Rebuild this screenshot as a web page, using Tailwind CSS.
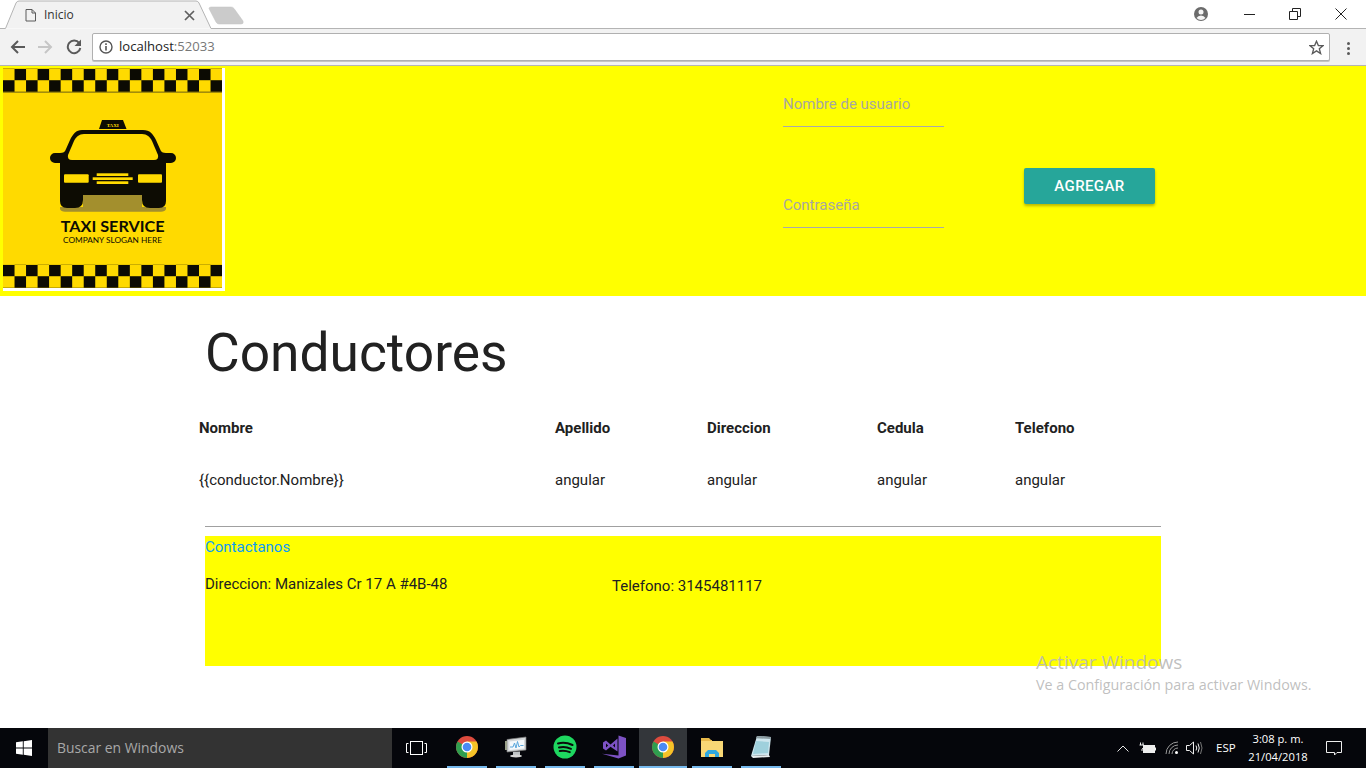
<!DOCTYPE html>
<html lang="es">
<head>
<meta charset="utf-8">
<title>Inicio</title>
<script src="https://cdn.jsdelivr.net/npm/@tailwindcss/browser@4"></script>
</head>
<body class="m-0 overflow-hidden bg-white font-['Roboto',sans-serif]">
<div class="relative flex h-[768px] w-[1366px] flex-col overflow-hidden">

  <!-- Tab strip -->
  <div class="relative flex h-[29px] shrink-0 items-start bg-white">
    <svg class="absolute left-0 top-0" width="250" height="29" viewBox="0 0 250 29">
      <path d="M0 28.5H5.5L16 3Q17 1 19 1H196Q198 1 199 3L211 28.5" fill="#f2f2f2" stroke="#b4b4b4"/>
      <path d="M209 8.5Q209 7 211 7H231Q233 7 234 8.5L243 21Q244 24 241 24H219Q217 24 216 22Z" fill="#cbcbcb" stroke="#c0c0c0" stroke-width=".5"/>
      <path d="M26 9.5H32L35.5 13V21H26Z M32 9.5V13H35.5" fill="none" stroke="#5a5a5a"/>
      <path d="M185 11L194 20M194 11L185 20" stroke="#5f5f5f" stroke-width="1.7"/>
    </svg>
    <span class="relative ml-[44px] mt-[7px] font-['Open_Sans',sans-serif] text-[12px] leading-[16px] text-[#333]">Inicio</span>
    <div class="absolute bottom-0 left-[211px] right-0 h-px bg-[#b4b4b4]"></div>
    <div class="absolute right-0 top-0 flex h-[28px] items-center">
      <svg class="mr-[35px]" width="16" height="16" viewBox="0 0 16 16">
        <circle cx="8" cy="8" r="7" fill="#6b6b6b"/>
        <circle cx="8" cy="6" r="2.5" fill="#f4f4f4"/>
        <path d="M3.5 12Q5 9.5 8 9.5T12.5 12Q10.500 14 8 14T3.5 12Z" fill="#f4f4f4"/>
      </svg>
      <svg class="mr-[33px]" width="12" height="12" viewBox="0 0 12 12"><path d="M0 6.500H11" stroke="#222" stroke-width="1"/></svg>
      <svg class="mr-[34px]" width="12" height="12" viewBox="0 0 12 12"><path d="M.5 3.500H8.500V11.500H.5ZM3.500 3.500V.5H11.500V8.500H8.500" fill="none" stroke="#222"/></svg>
      <svg class="mr-[19px]" width="12" height="12" viewBox="0 0 12 12"><path d="M.5 .5L11.500 11.500M11.500 .5L.5 11.500" stroke="#222"/></svg>
    </div>
  </div>

  <!-- Toolbar -->
  <div class="flex h-[37px] shrink-0 items-start border-b border-[#b4b4b4] bg-[#f2f2f2]">
    <div class="flex h-[36px] w-[92px] shrink-0 items-center pl-[10px]">
      <svg class="mr-[11px]" width="16" height="16" viewBox="0 0 16 16"><path d="M15 8H2M8 2L2 8L8 14" fill="none" stroke="#5a5a5a" stroke-width="2"/></svg>
      <svg class="mr-[13px]" width="16" height="16" viewBox="0 0 16 16"><path d="M1 8H14M8 2L14 8L8 14" fill="none" stroke="#c6c6c6" stroke-width="2"/></svg>
      <svg width="16" height="16" viewBox="0 0 16 16"><path d="M13.200 4.200A6.300 6.300 0 1 0 14.300 9" fill="none" stroke="#5a5a5a" stroke-width="2"/><path d="M15 0.500V7H8.500Z" fill="#5a5a5a"/></svg>
    </div>
    <div class="mt-[4px] flex h-[28px] w-[1238px] shrink-0 items-center rounded-[2px] border border-[#b0b0b0] bg-white pl-[6px] shadow-[0_1px_0_#c4c4c4]">
      <svg class="mr-[6px]" width="14" height="14" viewBox="0 0 14 14"><circle cx="7" cy="7" r="6" fill="none" stroke="#555" stroke-width="1.400"/><path d="M7 6V10.500M7 3.300V5" stroke="#555" stroke-width="1.600"/></svg>
      <span class="font-['Open_Sans',sans-serif] text-[13.100px] leading-none text-[#222]">localhost<span class="text-[#777]">:52033</span></span>
      <svg class="ml-auto mr-[5px]" width="15" height="15" viewBox="0 0 16 16"><path d="M8 1.300L10 6H15L11 9.300L12.400 14.500L8 11.600L3.600 14.500L5 9.300L1 6H6Z" fill="none" stroke="#5a5a5a" stroke-width="1.400"/></svg>
    </div>
    <div class="ml-[17px] mt-[13px] flex flex-col gap-[2px]">
      <span class="h-[3px] w-[3px] rounded-full bg-[#5a5a5a]"></span>
      <span class="h-[3px] w-[3px] rounded-full bg-[#5a5a5a]"></span>
      <span class="h-[3px] w-[3px] rounded-full bg-[#5a5a5a]"></span>
    </div>
  </div>

  <!-- Page -->
  <main class="relative min-h-0 flex-1 overflow-hidden bg-white">
    <header class="flex h-[230px] items-start bg-[#ffff00]">
      <div class="ml-[3px] mt-[2px] h-[223px] w-[222px] shrink-0 bg-white">
        <svg class="block" width="219" height="220" viewBox="0 0 219 220">
          <defs>
            <pattern id="chkA" patternUnits="userSpaceOnUse" width="23.060" height="23.060" x="0" y="0.700">
              <rect x="11.530" y="0" width="11.530" height="11.530" fill="#0c0b03"/>
              <rect x="0" y="11.530" width="11.530" height="11.530" fill="#0c0b03"/>
            </pattern>
            <pattern id="chkB" patternUnits="userSpaceOnUse" width="23.060" height="23.060" x="0" y="196.700">
              <rect x="0" y="0" width="11.530" height="11.530" fill="#0c0b03"/>
              <rect x="11.530" y="11.530" width="11.530" height="11.530" fill="#0c0b03"/>
            </pattern>
          </defs>
          <rect width="219" height="220" fill="#ffda00"/>
          <rect x="0" y="0.700" width="219" height="23.300" fill="url(#chkA)"/>
          <rect x="0" y="24" width="219" height=".8" fill="#8d7a10"/>
          <rect x="0" y="196.700" width="219" height="23.300" fill="url(#chkB)"/>
          <path d="M57 139H163V141Q162 143.700 158 143.700H62Q58 143.700 57 141Z" fill="#a38f2d"/>
          <rect x="80" y="127" width="59" height="16" fill="#a38f2d"/>
          <path d="M79 62H140C147 62 150 66 153 72L157 81C158 84 160 85 163 85H168A5 5 0 0 1 168 95H163V133Q163 140 156 140H147Q139 140 139 132V127H80V132Q80 140 72 140H64Q57 140 57 133V95H52A5 5 0 0 1 52 85H57C60 85 62 84 63 81L67 72C70 66 73 62 79 62Z" fill="#0d0c03"/>
          <path d="M81 66H139C144 66 147 69 149 73L155 87Q156 92 151 92H69Q64 92 65 87L71 73C73 69 76 66 81 66Z" fill="#ffda00"/>
          <path d="M99 52H120L123.500 61H96Z" fill="#0d0c03"/>
          <text x="109.700" y="59" text-anchor="middle" font-family="'Liberation Serif',serif" font-weight="700" font-size="5" fill="#ffda00">TAXI</text>
          <rect x="61" y="106.300" width="24.700" height="8.400" rx="1" fill="#ffda00"/>
          <rect x="135" y="106.300" width="24" height="8.400" rx="1" fill="#ffda00"/>
          <rect x="93.700" y="105.300" width="31.600" height="2.700" fill="#ffda00"/>
          <rect x="89.700" y="109.300" width="40" height="2.700" fill="#ffda00"/>
          <rect x="93.700" y="113.300" width="31.600" height="2.700" fill="#ffda00"/>
          <text x="57.700" y="164" textLength="104" lengthAdjust="spacingAndGlyphs" font-family="Lato,sans-serif" font-weight="700" font-size="15" fill="#0d0c03">TAXI SERVICE</text>
          <text x="60" y="174.700" textLength="99" lengthAdjust="spacingAndGlyphs" font-family="Lato,sans-serif" font-size="8" fill="#0d0c03">COMPANY SLOGAN HERE</text>
        </svg>
      </div>
      <div class="ml-[558px] w-[161px] shrink-0">
        <div class="mt-[28px] flex h-[33px] items-start border-b border-[#a9a9a9] text-[15px] leading-[20px] text-[#a8a7a0]">Nombre de usuario</div>
        <div class="mt-[68px] flex h-[33px] items-start border-b border-[#a9a9a9] text-[15px] leading-[20px] text-[#a8a7a0]">Contraseña</div>
      </div>
      <button class="ml-[80px] mt-[102px] h-[36px] w-[131px] shrink-0 rounded-[2px] bg-[#26a69a] text-[15px] font-medium tracking-[0.400px] text-white shadow-[0_2px_3px_rgba(0,0,0,0.28)]">AGREGAR</button>
    </header>

    <section class="mx-auto w-[956px]">
      <h1 class="mt-[23px] h-[68px] text-[53.300px] font-normal leading-[68px] text-[#212121]">Conductores</h1>
      <div class="-ml-[6px] mt-[31px] grid grid-cols-[356px_152px_170px_138px_1fr] text-[15px] leading-[20px] text-[#212121]">
        <div class="font-bold">Nombre</div>
        <div class="font-bold">Apellido</div>
        <div class="font-bold">Direccion</div>
        <div class="font-bold">Cedula</div>
        <div class="font-bold">Telefono</div>
        <div class="mt-[32px]">{{conductor.Nombre}}</div>
        <div class="mt-[32px]">angular</div>
        <div class="mt-[32px]">angular</div>
        <div class="mt-[32px]">angular</div>
        <div class="mt-[32px]">angular</div>
      </div>
      <hr class="mt-[36px] h-px border-0 bg-[#a0a0a0]">
      <footer class="mt-[9px] h-[130px] bg-[#ffff00] text-[15px] leading-[20px] text-[#212121]">
        <a class="block pt-[1px] text-[#0d9cf5]">Contactanos</a>
        <div class="mt-[17px] flex items-start">
          <span class="w-[407px] shrink-0">Direccion: Manizales Cr 17 A #4B-48</span>
          <span class="mt-[2px]">Telefono: 3145481117</span>
        </div>
      </footer>
    </section>

    <div class="absolute left-[1036px] top-[583px] font-['Open_Sans',sans-serif] text-[#b8b8b8]/90">
      <div class="text-[19px] leading-[26px]">Activar Windows</div>
      <div class="text-[14.300px] leading-[20px]">Ve a Configuración para activar Windows.</div>
    </div>
  </main>

  <!-- Taskbar -->
  <div class="flex h-[40px] shrink-0 items-stretch bg-[#05060b] font-['Open_Sans',sans-serif]">
    <div class="flex w-[48px] shrink-0 items-center justify-center">
      <svg width="16" height="16" viewBox="0 0 16 16"><path d="M0 2.300L6.800 1.300V7.500H0ZM7.700 1.200L16 0V7.500H7.700ZM0 8.400H6.800V14.700L0 13.700ZM7.700 8.400H16V16L7.700 14.800Z" fill="#fff"/></svg>
    </div>
    <div class="flex w-[344px] shrink-0 items-center bg-[#333333] pl-[9px] text-[13.900px] text-[#a8a8a8]">Buscar en Windows</div>
    <div class="flex w-[48px] shrink-0 items-center justify-center">
      <svg width="21" height="14" viewBox="0 0 21 14"><rect x="4.500" y=".5" width="12" height="13" fill="none" stroke="#fff"/><path d="M2.500 2.500H.5V11.500H2.500M18.500 2.500H20.500V11.500H18.500" fill="none" stroke="#fff"/></svg>
    </div>

    <div class="ml-[7px] flex w-[40px] shrink-0 items-center justify-center border-b-2 border-[#76b9ed]">
      <svg width="24" height="24" viewBox="0 0 24 24"><circle cx="12" cy="12" r="11" fill="#dd4b3e"/><path d="M12 12L2.500 6.500A11 11 0 0 0 12 23Z" fill="#2f9e4f"/><path d="M12 12L12 23A11 11 0 0 0 21.500 6.500H12Z" fill="#f6c327"/><circle cx="12" cy="12" r="5.500" fill="#fff"/><circle cx="12" cy="12" r="4.300" fill="#4a8af4"/></svg>
    </div>
    <div class="ml-[9px] flex w-[40px] shrink-0 items-center justify-center border-b-2 border-[#76b9ed]">
      <svg width="24" height="24" viewBox="0 0 24 24"><path d="M3 4.500L22 2V15L3 17Z" fill="#d4d8da" stroke="#777" stroke-width=".7"/><path d="M5.500 6.500L20 4.800V13.500L5.500 15Z" fill="#f4f8fb"/><path d="M6 12H9L10.500 8L12 13L13.500 6.500L15 12L16.500 10.500L19.500 10.500" fill="none" stroke="#5aa7dc" stroke-width="1"/><path d="M9 17L16 16.500V20L9 20.500Z" fill="#bfc3c5"/><ellipse cx="12" cy="21" rx="6" ry="1.500" fill="#d6d6d6"/><rect x="1" y="6" width="2" height="9" fill="#9aa08a"/></svg>
    </div>
    <div class="ml-[9px] flex w-[40px] shrink-0 items-center justify-center border-b-2 border-[#76b9ed]">
      <svg width="24" height="24" viewBox="0 0 24 24"><circle cx="12" cy="12" r="11.500" fill="#1ed760"/><path d="M5 8.500Q12 6.500 19.500 10M6 12.500Q12 11 18 13.800M6.700 16Q12 15 16.800 17.200" fill="none" stroke="#0b0b0b" stroke-width="2" stroke-linecap="round"/></svg>
    </div>
    <div class="ml-[9px] flex w-[40px] shrink-0 items-center justify-center border-b-2 border-[#76b9ed]">
      <svg width="24" height="24" viewBox="0 0 24 24"><path d="M16.500 .5L24 3V20.500L16.500 23.500L0 18.800L16.500 20.500Z" fill="#7d52c4"/><path d="M1 7.500L4 5.500L8.500 9.500L15.500 3.500V16.500L8.500 11.800L4 15.500L1 13.500ZM4 8.500V12.500L6.200 10.500ZM11 10.500L13 12.500V8.500Z" fill="#7d52c4" fill-rule="evenodd"/></svg>
    </div>
    <div class="ml-[5px] flex w-[48px] shrink-0 items-center justify-center border-b-2 border-[#76b9ed] bg-[#33363a]">
      <svg width="24" height="24" viewBox="0 0 24 24"><circle cx="12" cy="12" r="11" fill="#dd4b3e"/><path d="M12 12L2.500 6.500A11 11 0 0 0 12 23Z" fill="#2f9e4f"/><path d="M12 12L12 23A11 11 0 0 0 21.500 6.500H12Z" fill="#f6c327"/><circle cx="12" cy="12" r="5.500" fill="#fff"/><circle cx="12" cy="12" r="4.300" fill="#4a8af4"/></svg>
    </div>
    <div class="ml-[5px] flex w-[40px] shrink-0 items-center justify-center border-b-2 border-[#76b9ed]">
      <svg width="22" height="20" viewBox="0 0 22 20"><path d="M0 1H8L10 3H11V6H0Z" fill="#e8b94a"/><rect x="0" y="4" width="22" height="16" fill="#f8d775"/><path d="M4 20V16L7 13H15L18 16V20H14V17H8V20Z" fill="#2fa8e0"/></svg>
    </div>
    <div class="ml-[9px] flex w-[40px] shrink-0 items-center justify-center border-b-2 border-[#76b9ed]">
      <svg width="24" height="24" viewBox="0 0 24 24"><path d="M8 1L22 2L20 20L2 21Z" fill="#cfe6ee"/><path d="M8 1L22 2L21.800 4L7 3.300Z" fill="#8a9aa0"/><path d="M7 6L20 7L19 18L4 19Z" fill="#9fd0dc"/><path d="M2 21L20 20L21 22L4 23Z" fill="#e9eef0"/></svg>
    </div>

    <div class="ml-auto flex items-center text-white">
      <svg class="mr-[10px]" width="12" height="7" viewBox="0 0 12 7"><path d="M.5 6.500L6 1L11.500 6.500" fill="none" stroke="#e6e6e6"/></svg>
      <svg class="mr-[9px]" width="17" height="12" viewBox="0 0 17 12"><path d="M1.500 .5V3M4 .5V3M.5 3H5V5.500L3 7V9" fill="none" stroke="#eee"/><rect x="4.500" y="3.500" width="11" height="7" fill="#eee" stroke="#eee"/><rect x="16" y="5.500" width="1" height="3" fill="#eee"/></svg>
      <svg class="mr-[6px]" width="15" height="14" viewBox="0 0 15 14"><path d="M1 13A12 12 0 0 1 13 1M4 13A9 9 0 0 1 13 4M7 13A6 6 0 0 1 13 7" fill="none" stroke="#9a9a9a"/><circle cx="11.500" cy="11.500" r="1.500" fill="#fff"/></svg>
      <svg class="mr-[13px]" width="17" height="14" viewBox="0 0 17 14"><path d="M.5 4.500H3.500L7.500 1V13L3.500 9.500H.5Z" fill="none" stroke="#eee"/><path d="M10 4.500Q11.500 7 10 9.500M12 2.500Q14.500 7 12 11.500" fill="none" stroke="#eee"/><path d="M14.500 1Q17.500 7 14.500 13" fill="none" stroke="#777"/></svg>
      <span class="mr-[13px] w-[19px] text-[11.500px] leading-none">ESP</span>
      <div class="flex w-[60px] flex-col items-center text-[11.200px] leading-[18px]">
        <span>3:08 p. m.</span>
        <span>21/04/2018</span>
      </div>
      <svg class="ml-[18px] mr-[24px]" width="16" height="15" viewBox="0 0 16 15"><path d="M.5 .5H15.500V11.500H11L8.500 14V11.500H.5Z" fill="none" stroke="#eee"/></svg>
    </div>
  </div>
</div>
</body>
</html>
